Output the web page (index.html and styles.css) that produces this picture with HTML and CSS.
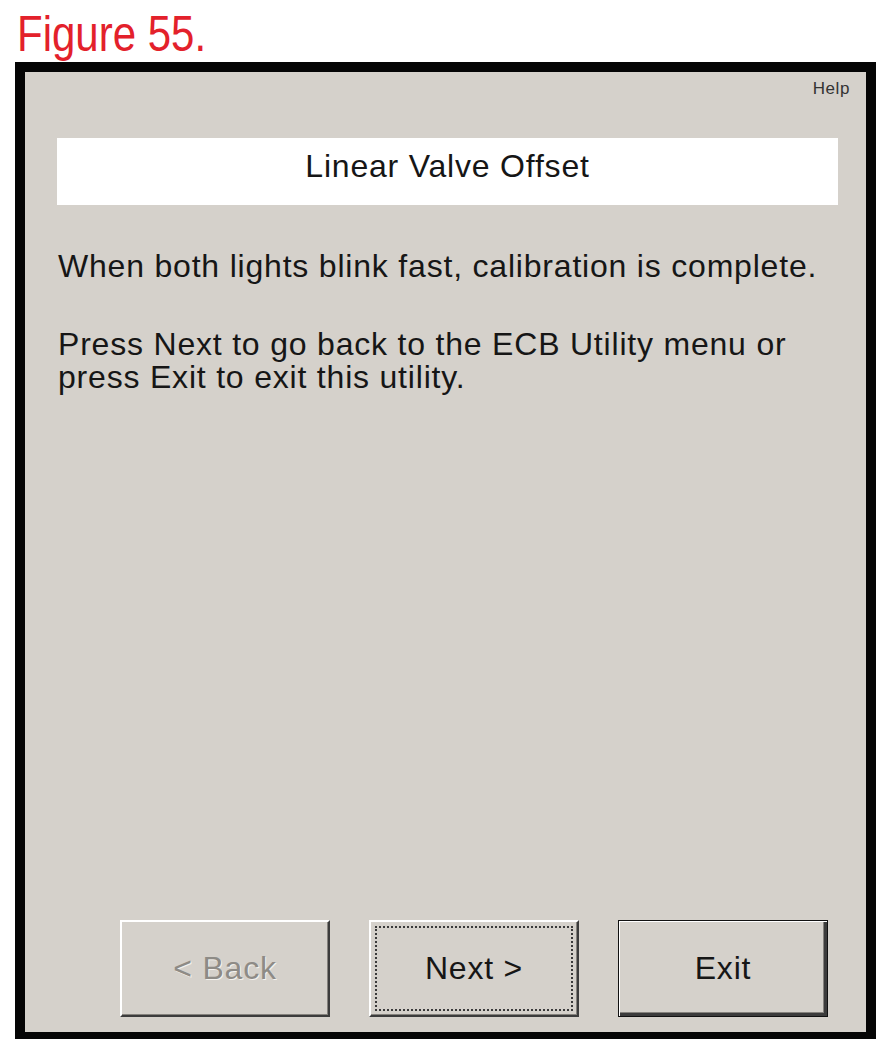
FILE: index.html
```html
<!DOCTYPE html>
<html lang="en">
<head>
    <meta charset="UTF-8">
    <meta name="viewport" content="width=device-width, initial-scale=1.0">
    <title>Figure 55 - Linear Valve Offset</title>
    <link rel="stylesheet" href="styles.css">
</head>
<body>
    <div class="caption"><span>Figure 55.</span></div>

    <!-- Dialog window -->
    <div class="window">
        <div class="help">Help</div>

        <div class="title-box">Linear Valve Offset</div>

        <div class="message">
            <p>When both lights blink fast, calibration is complete.</p>
            <p>Press Next to go back to the ECB Utility menu or<br>press Exit to exit this utility.</p>
        </div>

        <div class="buttons">
            <button class="btn disabled" disabled>&lt; Back</button>
            <button class="btn focused"><span>Next &gt;</span></button>
            <button class="btn default">Exit</button>
        </div>
    </div>
</body>
</html>
```

FILE: styles.css
```css
body {
    margin: 0;
    background-color: #ffffff;
    font-family: "Liberation Sans", Arial, sans-serif;
}

.caption {
    margin: 9px 0 0 17px;
    font-size: 50px;
    line-height: 50px;
    color: #e3212b;
}

.caption span {
    display: inline-block;
    transform: scaleX(0.84);
    transform-origin: left center;
}

.window {
    box-sizing: border-box;
    width: 861px;
    height: 977px;
    margin: 3px 0 0 15px;
    border: 10px solid #050505;
    border-bottom-width: 7px;
    background-color: #d5d1cb;
    padding: 7px 28px 0 32px;
    display: flex;
    flex-direction: column;
    color: #161616;
}

.help {
    text-align: right;
    margin-right: -12px;
    font-size: 17px;
    line-height: 20px;
    letter-spacing: 0.6px;
    color: #333;
}

.title-box {
    margin-top: 39px;
    background-color: #ffffff;
    padding: 11px 0 21px;
    text-align: center;
    font-size: 32px;
    line-height: 35px;
    letter-spacing: 0.8px;
}

.message {
    flex: 1;
    padding-left: 1px;
    font-size: 32px;
    line-height: 33px;
    letter-spacing: 0.8px;
    white-space: nowrap;
}

.message p {
    margin: 45px 0 0;
}

.buttons {
    display: flex;
    justify-content: flex-end;
    gap: 39px;
    padding: 0 10px 15px 0;
}

/* Botones estilo Windows clásico */
.btn {
    box-sizing: border-box;
    width: 210px;
    height: 97px;
    padding: 0;
    background-color: #d5d1cb;
    border: 2px solid;
    border-color: #ffffff #3c3c3c #3c3c3c #ffffff;
    box-shadow: inset -1px -1px #85827d;
    font-family: "Liberation Sans", Arial, sans-serif;
    font-size: 32px;
    letter-spacing: 0.8px;
    color: #161616;
    cursor: pointer;
}

.btn.disabled {
    color: #8e8b86;
    text-shadow: 1px 1px 0 #f4f2ee;
    cursor: default;
}

.btn.focused {
    padding: 4px;
}

.btn.focused span {
    display: flex;
    align-items: center;
    justify-content: center;
    height: 100%;
    border: 2px dotted #3a3a3a;
    box-sizing: border-box;
}

.btn.default {
    border: 1px solid #111;
    box-shadow: inset 1px 1px #ffffff, inset -3px -3px #3c3c3c, inset -4px -4px #85827d;
}
```
